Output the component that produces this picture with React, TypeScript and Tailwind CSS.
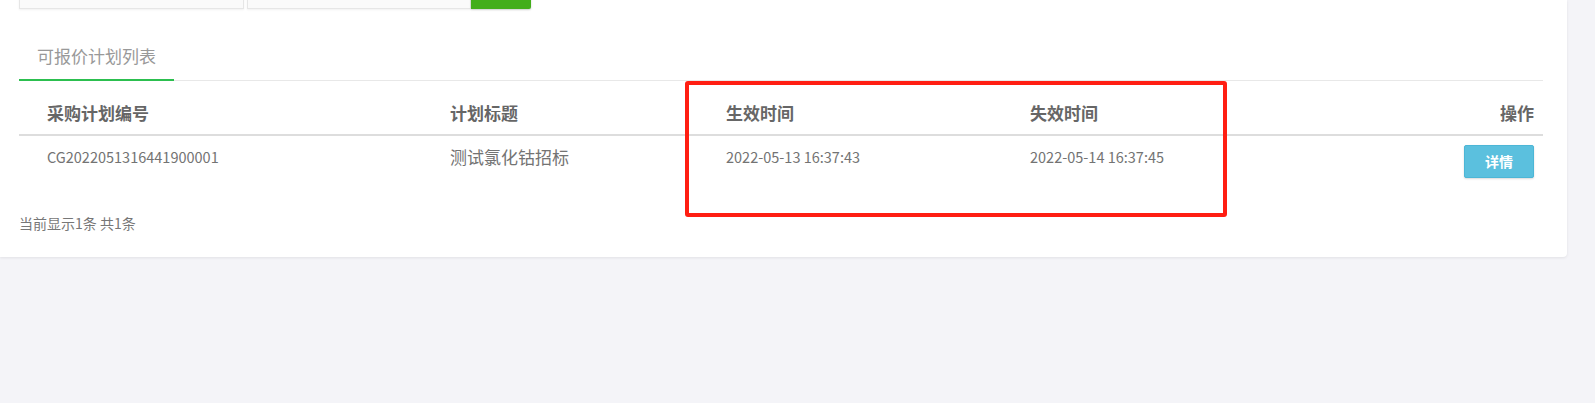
import React from "react";

const font = { fontFamily: '"Noto Sans CJK SC", "Noto Sans", sans-serif' };

export default function App() {
  return (
    <div className="h-[403px] w-[1595px] bg-[#f4f4f8] overflow-hidden" style={font}>
      <div className="relative flow-root w-[1567px] h-[257px] bg-white rounded-br-[4px] shadow-[0_1px_3px_rgba(0,0,0,0.08)] pl-[19px] pr-[24px]">
        {/* search row (cut off at top) */}
        <div className="flex items-stretch h-[34px] -mt-[25px]">
          <div className="w-[225px] bg-[#fafafa] border border-[#e6e6e6] shadow-[0_1px_2px_rgba(0,0,0,0.06)]" />
          <div className="w-[224px] ml-[3px] bg-[#fafafa] border border-[#e6e6e6] shadow-[0_1px_2px_rgba(0,0,0,0.06)]" />
          <div className="w-[60px] bg-[#43ae1b] rounded-br-[2px] shadow-[0_1px_2px_rgba(0,0,0,0.2)]" />
        </div>

        {/* tabs */}
        <div className="flex mt-[24px] border-b border-[#e8e8e8]">
          <div className="-mb-px px-[18px] pt-[11px] pb-[11px] border-b-2 border-[#2cbf4f] text-[17px] leading-[24px] text-[#999999]">
            可报价计划列表
          </div>
        </div>

        {/* table */}
        <div className="grid grid-cols-[423px_276px_304px_1fr_auto]">
          <div className="pl-[28px] pt-[20px] pb-[9px] text-[17px] leading-[24px] font-bold text-[#666666] border-b-2 border-[#dddddd]">采购计划编号</div>
          <div className="pl-[8px] pt-[20px] pb-[9px] text-[17px] leading-[24px] font-bold text-[#666666] border-b-2 border-[#dddddd]">计划标题</div>
          <div className="pl-[8px] pt-[20px] pb-[9px] text-[17px] leading-[24px] font-bold text-[#666666] border-b-2 border-[#dddddd]">生效时间</div>
          <div className="pl-[8px] pt-[20px] pb-[9px] text-[17px] leading-[24px] font-bold text-[#666666] border-b-2 border-[#dddddd]">失效时间</div>
          <div className="pr-[9px] pt-[20px] pb-[9px] text-[17px] leading-[24px] font-bold text-[#666666] border-b-2 border-[#dddddd] text-right">操作</div>

          <div className="pl-[28px] pt-[9px] pb-[9px] text-[14.5px] leading-[24px] text-[#737373]">CG2022051316441900001</div>
          <div className="pl-[8px] pt-[9px] pb-[9px] text-[17px] leading-[24px] text-[#737373]">测试氯化钴招标</div>
          <div className="pl-[8px] pt-[9px] pb-[9px] text-[14.5px] leading-[24px] text-[#737373]">2022-05-13 16:37:43</div>
          <div className="pl-[8px] pt-[9px] pb-[9px] text-[14.5px] leading-[24px] text-[#737373]">2022-05-14 16:37:45</div>
          <div className="pr-[9px] pt-[9px] pb-[9px] flex justify-end">
            <button className="w-[70px] h-[33px] bg-[#5bc0de] border border-[#4cb6d6] rounded-[2px] text-white text-[14px] font-bold shadow-[0_1px_2px_rgba(0,0,0,0.15)]">
              详情
            </button>
          </div>
        </div>

        {/* footer */}
        <div className="mt-[26px] text-[14px] leading-[20px] text-[#777777]">当前显示1条 共1条</div>

        {/* red annotation box */}
        <div className="absolute left-[685px] top-[81px] w-[542px] h-[136px] border-4 border-[#ff1e12] rounded-[3px]" />
      </div>
    </div>
  );
}
